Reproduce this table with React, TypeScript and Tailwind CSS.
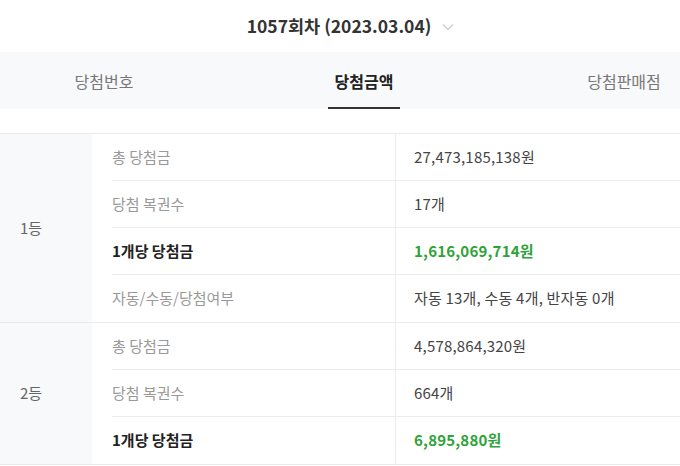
const font = { fontFamily: '"Noto Sans CJK KR", "Noto Sans", sans-serif' };

type Row = { label: string; value: string; strong?: boolean };

const groups: { rank: string; rows: Row[] }[] = [
  {
    rank: '1등',
    rows: [
      { label: '총 당첨금', value: '27,473,185,138원' },
      { label: '당첨 복권수', value: '17개' },
      { label: '1개당 당첨금', value: '1,616,069,714원', strong: true },
      { label: '자동/수동/당첨여부', value: '자동 13개, 수동 4개, 반자동 0개' },
    ],
  },
  {
    rank: '2등',
    rows: [
      { label: '총 당첨금', value: '4,578,864,320원' },
      { label: '당첨 복권수', value: '664개' },
      { label: '1개당 당첨금', value: '6,895,880원', strong: true },
    ],
  },
];

export default function App() {
  return (
    <div className="w-[680px] h-[466px] overflow-hidden bg-white" style={font}>
      {/* header */}
      <div className="h-[52px] flex items-center justify-center gap-[10px] pl-[22px]">
        <span className="text-[17.5px] font-bold text-[#333]">1057회차 (2023.03.04)</span>
        <svg width="14" height="10" viewBox="0 0 14 10" className="mt-[1px]">
          <path d="M2 2.5 L7 7.5 L12 2.5" fill="none" stroke="#cfcfcf" strokeWidth="1.5" />
        </svg>
      </div>

      {/* tabs */}
      <div className="h-[57px] bg-[#f8f9fa] flex ml-[-26px]">
        {['당첨번호', '당첨금액', '당첨판매점'].map((t, i) => (
          <div key={t} className="w-[260px] shrink-0 flex justify-center">
            <div
              className={
                i === 1
                  ? 'h-full flex items-center px-[7px] border-b-2 border-[#333] text-[16px] font-bold text-[#222] pt-[2px]'
                  : 'h-full flex items-center text-[16px] text-[#777]'
              }
            >
              {t}
            </div>
          </div>
        ))}
      </div>

      {/* table */}
      <div className="mt-[24px] border-t border-[#e9e9e9]">
        {groups.map((g) => (
          <div key={g.rank} className="flex border-b border-[#ececec]">
            <div className="w-[92px] shrink-0 bg-[#f8f9fa] flex items-center pl-[20px] text-[15px] text-[#666]">
              {g.rank}
            </div>
            <div className="flex-1">
              {g.rows.map((r, i) => (
                <div key={r.label} className="flex h-[47px]">
                  <div
                    className={
                      'w-[283px] shrink-0 ml-[20px] flex items-center ' +
                      (i < g.rows.length - 1 ? 'border-b border-[#ececec]' : '')
                    }
                  >
                    <span className={r.strong ? 'text-[15px] font-bold text-[#222]' : 'text-[15px] text-[#999]'}>
                      {r.label}
                    </span>
                  </div>
                  <div
                    className={
                      'flex-1 flex items-center pl-[18px] border-l border-[#ececec] ' +
                      (i < g.rows.length - 1 ? 'border-b border-[#ececec]' : '')
                    }
                  >
                    <span
                      className={
                        r.strong
                          ? 'text-[15px] font-bold text-[#2ea33a] tracking-[0.2px]'
                          : 'text-[15px] text-[#444] tracking-[0.2px]'
                      }
                    >
                      {r.value}
                    </span>
                  </div>
                </div>
              ))}
            </div>
          </div>
        ))}
      </div>
    </div>
  );
}
